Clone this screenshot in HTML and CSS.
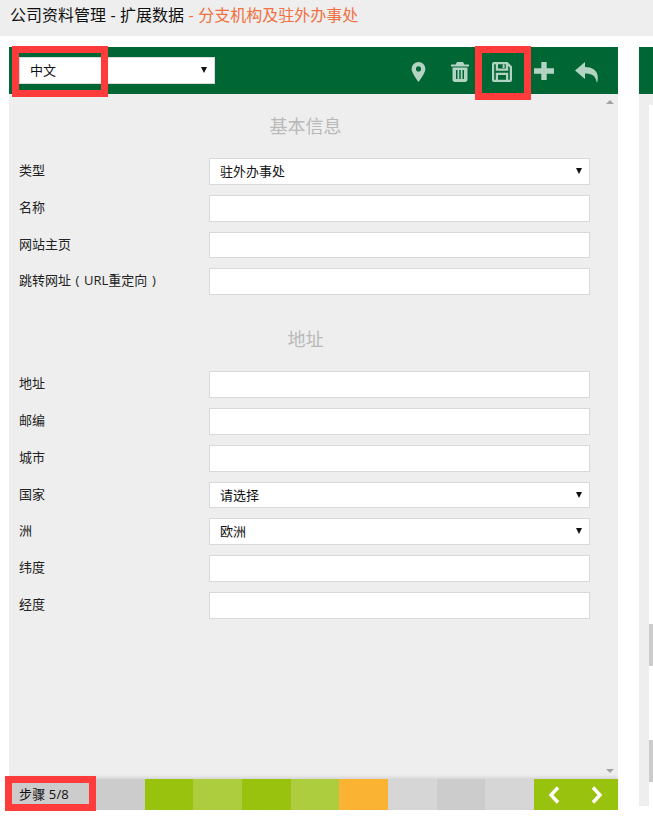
FILE: index.html
```html
<!DOCTYPE html>
<html lang="zh">
<head>
<meta charset="utf-8">
<title>公司资料管理</title>
<link rel="stylesheet" href="styles.css">
</head>
<body>
<header class="title">公司资料管理 - 扩展数据 <span class="title-sub">- 分支机构及驻外办事处</span></header>
<div class="columns">
  <main class="panel">
    <div class="toolbar">
      <div class="select lang"><span>中文</span></div>
      <div class="tools">
        <svg class="ico pin" viewBox="0 0 16 22"><path fill-rule="evenodd" d="M8 0a7.6 7.600 0 0 0-7.600 7.600c0 2.900 3.600 9 7.600 14.400 4-5.400 7.600-11.500 7.600-14.400A7.600 7.600 0 0 0 8 0zm0 4.800a2.800 2.800 0 1 1 0 5.600 2.800 2.800 0 0 1 0-5.600z"/></svg>
        <svg class="ico trash" viewBox="0 0 18 20"><path fill-rule="evenodd" d="M6 0h6l1.300 2.400H18v2.200H0V2.400h4.700zM1.500 5.600h15v11.900c0 1.400-1 2.500-2.300 2.500H3.800c-1.300 0-2.300-1.100-2.300-2.500zM5 8v9h1.500V8zm3.250 0v9h1.500V8zm3.250 0v9H13V8z"/></svg>
        <svg class="ico save" viewBox="0 0 20 20"><path fill-rule="evenodd" d="M2 0h13.500L20 4.500V18a2 2 0 0 1-2 2H2a2 2 0 0 1-2-2V2a2 2 0 0 1 2-2zm.2 2.200v15.600h1.600V10.800h12.400v7h1.600V5.400l-1.600-1.600v4.900H3.800V2.200zm3.800 0v4.300h7.800V2.200zm4.600.4h2v3.400h-2zM6 13v4.800h8V13z"/></svg>
        <svg class="ico plus" viewBox="0 0 20 18"><path d="M7.300 0h5.400v6.300H20v5.400h-7.300V18H7.300v-6.300H0V6.300h7.300z"/></svg>
        <svg class="ico back" viewBox="0 0 24 21"><path d="M10 0 0 8.500 10 17v-5.500c6.500 0 10.500 1.800 12 9.500 2.800-9.500-1.500-16-12-16z"/></svg>
      </div>
    </div>
    <div class="form-area">
      <h2 class="section">基本信息</h2>
      <div class="row"><label>类型</label><div class="select"><span>驻外办事处</span></div></div>
      <div class="row"><label>名称</label><input class="field" type="text"></div>
      <div class="row"><label>网站主页</label><input class="field" type="text"></div>
      <div class="row"><label>跳转网址<span class="paren">(</span>URL重定向<span class="paren">)</span></label><input class="field" type="text"></div>
      <h2 class="section section-addr">地址</h2>
      <div class="row"><label>地址</label><input class="field" type="text"></div>
      <div class="row"><label>邮编</label><input class="field" type="text"></div>
      <div class="row"><label>城市</label><input class="field" type="text"></div>
      <div class="row"><label>国家</label><div class="select"><span>请选择</span></div></div>
      <div class="row"><label>洲</label><div class="select"><span>欧洲</span></div></div>
      <div class="row"><label>纬度</label><input class="field" type="text"></div>
      <div class="row"><label>经度</label><input class="field" type="text"></div>
      <i class="scroll-up"></i>
      <i class="scroll-down"></i>
    </div>
    <footer class="steps">
      <div class="step-label">步骤 5/8</div>
      <div class="step grey"></div>
      <div class="step green"></div>
      <div class="step lime"></div>
      <div class="step green"></div>
      <div class="step lime"></div>
      <div class="step orange"></div>
      <div class="step pale"></div>
      <div class="step grey"></div>
      <div class="step pale"></div>
      <div class="nav">
        <svg viewBox="0 0 14 18"><path d="M10 1.500 3 9l7 7.500"/></svg>
        <svg viewBox="0 0 14 18"><path d="M4 1.500 11 9l-7 7.500"/></svg>
      </div>
    </footer>
    <div class="mark mark-lang"></div>
    <div class="mark mark-save"></div>
    <div class="mark mark-step"></div>
  </main>
  <aside class="peek">
    <div class="peek-bar"></div>
    <div class="peek-body">
      <div class="peek-sheet">
        <div class="peek-block"></div>
        <div class="peek-block peek-block-2"></div>
      </div>
    </div>
  </aside>
</div>
</body>
</html>
```
FILE: styles.css
```css
* { box-sizing: border-box; }
html, body { margin: 0; padding: 0; }
body {
  width: 653px;
  height: 818px;
  overflow: hidden;
  background: #fff;
  font-family: "Open Sans", "Noto Sans CJK SC", sans-serif;
  font-size: 13px;
  color: #222;
}
.title {
  height: 36px;
  padding-left: 10px;
  background: #eee;
  font-size: 16px;
  line-height: 31px;
  word-spacing: .3px;
  color: #111;
  white-space: nowrap;
}
.title-sub { color: #f0703f; }
.columns {
  display: flex;
  padding: 11px 0 0 9px;
  gap: 21px;
}
.panel { position: relative; width: 609px; flex: none; }
.toolbar {
  height: 47px;
  background: #006633;
  display: flex;
  align-items: flex-start;
  justify-content: space-between;
  padding: 10px 0 0 10px;
}
.lang { width: 196px; height: 27px; }
.tools { display: flex; align-items: center; height: 30px; }
.ico { display: block; fill: #b3d4c2; flex: none; }
.pin { width: 15px; height: 20px; margin-right: 25px; }
.trash { width: 18px; height: 20px; margin-right: 23px; }
.save { width: 20px; height: 20px; margin-right: 22px; }
.plus { width: 20px; height: 18px; margin-right: 21px; margin-top: -2px; }
.back { width: 24px; height: 21px; margin-right: 19px; }
.form-area {
  position: relative;
  height: 685px;
  background: #eee;
  padding: 21px 26px 0 10px;
}
.section {
  margin: 0 0 20px;
  height: 23px;
  font-size: 18px;
  font-weight: 400;
  line-height: 23px;
  text-align: center;
  color: #b9b9b9;
}
.section-addr { margin-top: 33px; margin-bottom: 20px; }
.row {
  display: flex;
  height: 26.8px;
  margin-bottom: 10px;
}
.row label {
  width: 190px;
  flex: none;
  line-height: 24px;
  white-space: nowrap;
  color: #222;
}
.paren {
  display: inline-block;
  width: 13px;
  text-align: center;
}
.field, .row .select { width: 381px; height: 26.8px; flex: none; }
.field {
  display: block;
  margin: 0;
  padding: 0 10px;
  background: #fff;
  border: 1px solid #d9d9d9;
  border-radius: 0;
  outline: none;
}
.select {
  position: relative;
  background: #fff;
  border: 1px solid #d9d9d9;
  padding-left: 10px;
  line-height: 25px;
  font-size: 13px;
  color: #111;
}
.select::after {
  content: "";
  position: absolute;
  right: 7px;
  top: 9px;
  border-left: 3px solid transparent;
  border-right: 3px solid transparent;
  border-top: 6px solid #111;
}
.scroll-up, .scroll-down {
  position: absolute;
  right: 4px;
  border-left: 4px solid transparent;
  border-right: 4px solid transparent;
}
.scroll-up { top: 6px; border-bottom: 4px solid #a3a3a3; }
.scroll-down { bottom: 6px; border-top: 4px solid #a3a3a3; }
.steps {
  display: flex;
  height: 31px;
  box-shadow: 0 -2px 3px rgba(0,0,0,.1);
  position: relative;
}
.step-label {
  width: 87px;
  flex: none;
  background: #ccc;
  padding-left: 10px;
  line-height: 30px;
  font-size: 13px;
  letter-spacing: .15px;
  color: #111;
}
.step { width: 48.67px; flex: none; }
.grey { background: #ccc; }
.green { background: #99c20e; }
.lime { background: #aecd3e; }
.orange { background: #fab333; }
.pale { background: #d6d6d6; }
.nav {
  flex: 1;
  background: #99c20e;
  display: flex;
  align-items: center;
  justify-content: space-between;
  padding: 0 15.5px 0 14.5px;
}
.nav svg {
  display: block;
  width: 14px;
  height: 18px;
  fill: none;
  stroke: #fff;
  stroke-width: 3.4;
}
.mark {
  position: absolute;
  border: 7px solid #ff3b3b;
  pointer-events: none;
}
.mark-lang { left: 3px; top: -1px; width: 96px; height: 51px; }
.mark-save { left: 466px; top: -1px; width: 56px; height: 54px; }
.mark-step { left: -4px; top: 729px; width: 91px; height: 35px; }
.peek { flex: 1; }
.peek-bar { height: 47px; background: #006633; }
.peek-body { height: 712px; background: #eee; padding: 11px 0 0 10px; }
.peek-sheet { height: 701px; background: #fff; padding-top: 519px; }
.peek-block { height: 42px; background: #ccc; }
.peek-block-2 { margin-top: 74px; }
```
